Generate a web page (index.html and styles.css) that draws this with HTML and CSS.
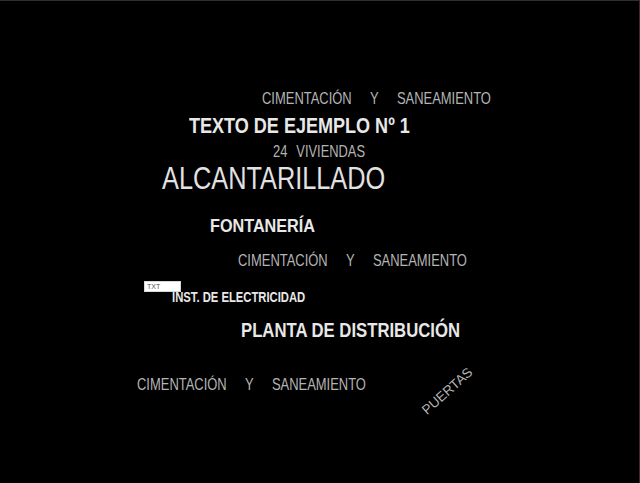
FILE: index.html
```html
<!DOCTYPE html>
<html lang="es">
<head>
    <meta charset="UTF-8">
    <meta name="viewport" content="width=device-width, initial-scale=1.0">
    <title>Visor de textos</title>
    <link rel="stylesheet" href="styles.css">
</head>
<body>
    <div class="canvas">
        <!-- textos del plano, cada uno en su sitio -->
        <span class="label light cim-1">CIMENTACIÓN Y SANEAMIENTO</span>
        <span class="label bold titulo">TEXTO DE EJEMPLO Nº 1</span>
        <span class="label light viviendas">24 VIVIENDAS</span>
        <span class="label regular alcantarillado">ALCANTARILLADO</span>
        <span class="label bold fontaneria">FONTANERÍA</span>
        <span class="label light cim-2">CIMENTACIÓN Y SANEAMIENTO</span>
        <span class="label bold electricidad">INST. DE ELECTRICIDAD</span>
        <span class="txt-tag">TXT</span>
        <span class="label bold planta">PLANTA DE DISTRIBUCIÓN</span>
        <span class="label light cim-3">CIMENTACIÓN Y SANEAMIENTO</span>
        <span class="label light puertas">PUERTAS</span>
    </div>
</body>
</html>
```

FILE: styles.css
```css
* {
    margin: 0;
    padding: 0;
    box-sizing: border-box;
}

html, body {
    width: 100%;
    height: 100%;
    background-color: #000;
    overflow: hidden;
}

.canvas {
    position: relative;
    width: 640px;
    height: 483px;
    background-color: #000;
    border-top: 1px solid #2e2e2e;
    border-right: 1px solid #3a2c26;
    font-family: 'Liberation Sans', Arial, sans-serif;
}

.label {
    position: absolute;
    white-space: nowrap;
    line-height: 1;
    transform-origin: left top;
}

.light {
    color: #b4b4b4;
    font-weight: normal;
}

.regular {
    color: #e2e2e2;
    font-weight: normal;
}

.bold {
    color: #e8e8e8;
    font-weight: bold;
}

.cim-1,
.cim-2,
.cim-3 {
    font-size: 16.5px;
    word-spacing: 19px;
    transform: scaleX(0.785);
}

.cim-1 {
    left: 262px;
    top: 89px;
}

.cim-2 {
    left: 238px;
    top: 251px;
}

.cim-3 {
    left: 137px;
    top: 375px;
}

.titulo {
    left: 189px;
    top: 114px;
    font-size: 22px;
    transform: scaleX(0.82);
}

.viviendas {
    left: 273px;
    top: 142px;
    font-size: 16.5px;
    word-spacing: 7px;
    transform: scaleX(0.78);
}

.alcantarillado {
    left: 162px;
    top: 163px;
    font-size: 30.7px;
    transform: scaleX(0.825);
}

.fontaneria {
    left: 210px;
    top: 216px;
    font-size: 18px;
    transform: scaleX(0.9);
}

.electricidad {
    left: 172px;
    top: 288px;
    font-size: 15px;
    transform: scaleX(0.75);
}

.txt-tag {
    position: absolute;
    left: 144px;
    top: 280px;
    width: 37px;
    height: 11px;
    background-color: #fff;
    border: 1px solid #d8d8d8;
    color: #555;
    font-size: 7px;
    line-height: 9px;
    padding-left: 2px;
}

.planta {
    left: 241px;
    top: 319px;
    font-size: 20px;
    transform: scaleX(0.835);
}

.puertas {
    left: 416px;
    top: 383px;
    width: 64px;
    font-size: 13.5px;
    transform-origin: center;
    transform: rotate(-42deg);
}
```
